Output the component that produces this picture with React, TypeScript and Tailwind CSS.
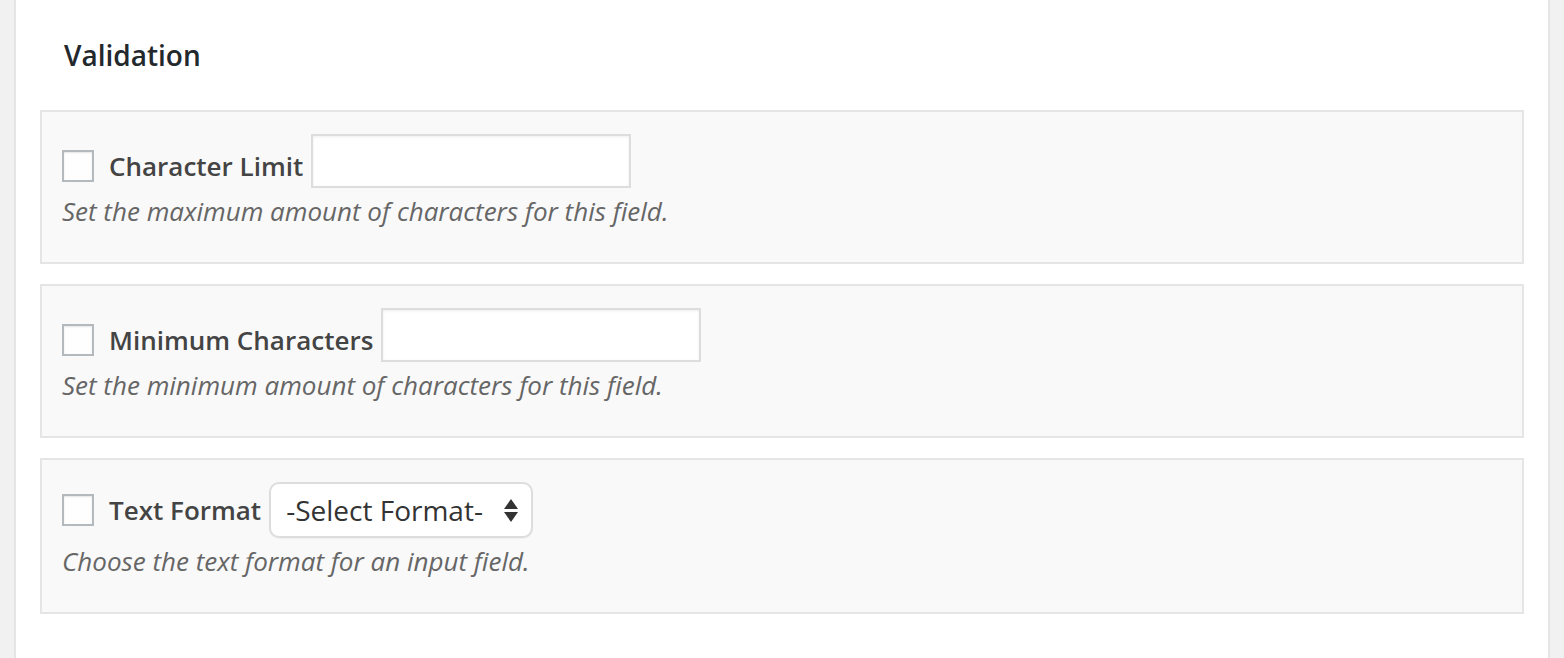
import React from 'react';

const font = { fontFamily: '"Open Sans", "Noto Sans", sans-serif' };

const Box: React.FC<{ label: string; desc: string; offset?: string; children: React.ReactNode }> = ({
  label,
  desc,
  offset = 'mt-[16px]',
  children,
}) => (
  <div className="border-2 border-[#e5e5e5] bg-[#f9f9f9] px-[20px] pt-[22px] pb-[35px]">
    <div className="flex items-start">
      <span
        className={`${offset} block h-[32px] w-[32px] shrink-0 border-2 border-[#b4b9be] bg-[#fefefe] shadow-[inset_0_1px_2px_rgba(0,0,0,0.1)]`}
      />
      <span className={`${offset} ml-[15px] mr-[8px] text-[26px] leading-[32px] font-semibold text-[#444]`}>{label}</span>
      {children}
    </div>
    <p className="mt-[7px] text-[26px] leading-[32px] italic text-[#666]">{desc}</p>
  </div>
);

export default function App() {
  return (
    <div className="flex h-screen bg-[#f1f1f1] px-[14px]" style={font}>
      <div className="flex-1 border-x-2 border-[#e5e5e5] bg-white px-[24px]">
        <h3 className="pl-[24px] pt-[39px] pb-[39px] text-[28px] leading-[32px] font-semibold text-[#23282d]">Validation</h3>
        <div className="flex flex-col gap-[20px]">
          <Box label="Character Limit" desc="Set the maximum amount of characters for this field.">
            <span className="block h-[54px] w-[320px] border-2 border-[#dddddd] bg-white shadow-[inset_0_1px_3px_rgba(0,0,0,0.07)]" />
          </Box>
          <Box label="Minimum Characters" desc="Set the minimum amount of characters for this field.">
            <span className="block h-[54px] w-[320px] border-2 border-[#dddddd] bg-white shadow-[inset_0_1px_3px_rgba(0,0,0,0.07)]" />
          </Box>
          <Box label="Text Format" desc="Choose the text format for an input field." offset="mt-[12px]">
            <div className="flex h-[56px] w-[264px] items-center justify-between rounded-[10px] border-2 border-[#dddddd] bg-white pl-[15px] pr-[13px] shadow-[0_1px_1px_rgba(0,0,0,0.04)]">
              <span className="text-[28px] leading-[32px] text-[#333]">-Select Format-</span>
              <svg width="14" height="24" viewBox="0 0 14 24" className="fill-[#333]">
                <path d="M7 1 L14 11 L0 11 Z" />
                <path d="M0 14 L14 14 L7 24 Z" />
              </svg>
            </div>
          </Box>
        </div>
      </div>
    </div>
  );
}
